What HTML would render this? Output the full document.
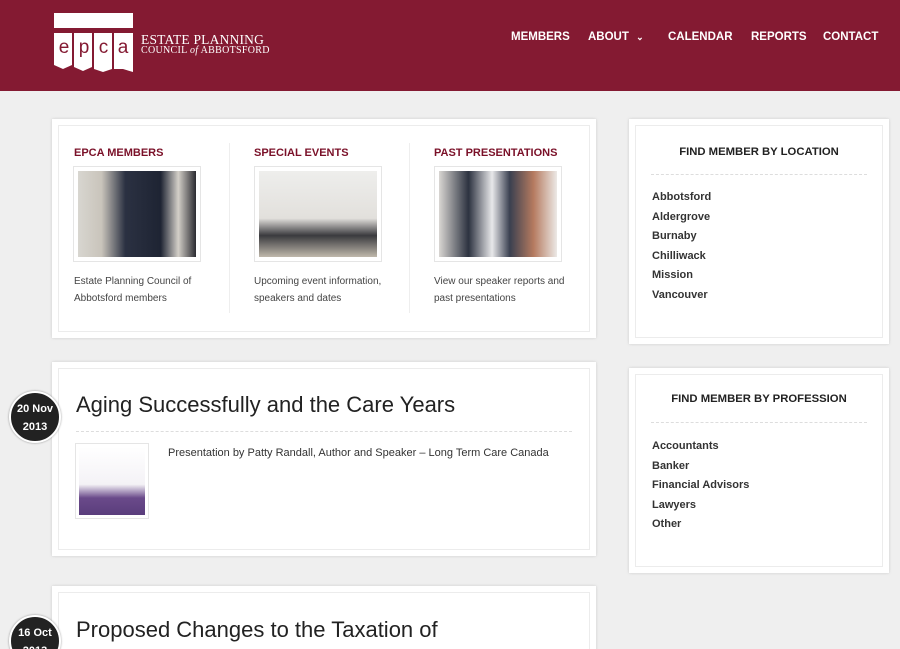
<!DOCTYPE html>
<html><head><meta charset="utf-8"><style>
*{margin:0;padding:0;box-sizing:border-box}
html,body{width:900px;height:649px;overflow:hidden}
body{background:#efefef;font-family:"Liberation Sans",sans-serif;color:#333;position:relative}
.hdr{position:absolute;left:0;top:0;width:900px;height:91px;background:#841a32}
.nav{position:absolute;top:31px;font-weight:bold;font-size:11.5px;color:#fff}
.box{position:absolute;background:#fff;box-shadow:0 0 3px rgba(0,0,0,.15)}
.in{position:absolute;left:6px;top:6px;right:6px;bottom:6px;border:1px solid #ececec}
.abs{position:absolute}
.h3{font-weight:bold;font-size:11px;color:#7a1028}
.img{position:absolute;width:128px;height:96px;border:1px solid #e5e5e5;padding:4px;background:#fff}
.img div{width:100%;height:100%}
.txt{font-size:10px;line-height:17px;color:#444}
.vl{position:absolute;top:24px;width:1px;height:170px;background:#eee}
.side h4{font-size:11.3px;font-weight:bold;color:#222;text-align:center}
.list{font-size:11px;font-weight:bold;color:#333;line-height:19.5px}
.date{position:absolute;left:9px;width:52px;height:52px;border-radius:50%;background:#222;border:2px solid #fff;box-shadow:0 0 2px rgba(0,0,0,.4);color:#fff;font-weight:bold;font-size:11px;text-align:center;line-height:18px;padding-top:7px}
.title{font-size:22px;color:#222}
.dash{position:absolute;border-top:1px dashed #ddd;height:0}
</style></head><body>
<div class="hdr">
 <div class="abs" style="left:54px;top:13px;width:79px;height:15px;background:#fff"></div>
 <div class="abs" style="left:54px;top:33px;width:79px;height:42px">
  <svg width="79" height="42" viewBox="0 0 79 42">
   <path d="M0 0h18v32l-9 4-9-4z M20 0h18v34l-9 4-9-4z M40 0h18v36l-9 3-9-3z M60 0h19v39l-10-3-9 0z" fill="#fff"/>
  </svg>
  <div class="abs" style="left:0;top:4px;width:79px;font-family:'Liberation Sans',sans-serif;font-size:19px;color:#841a32;display:flex;justify-content:space-around">
   <span>e</span><span>p</span><span>c</span><span>a</span></div>
 </div>
 <div class="abs" style="left:141px;top:32px;font-family:'Liberation Serif',serif;color:#fff;font-size:13.5px;letter-spacing:.2px">ESTATE PLANNING</div>
 <div class="abs" style="left:141px;top:45px;font-family:'Liberation Serif',serif;color:#fff;font-size:10px;letter-spacing:.3px">COUNCIL <i>of</i> ABBOTSFORD</div>
 <div class="nav" style="left:511px">MEMBERS</div>
 <div class="nav" style="left:588px">ABOUT <span style="font-size:9px;margin-left:4px">&#8964;</span></div>
 <div class="nav" style="left:668px">CALENDAR</div>
 <div class="nav" style="left:751px">REPORTS</div>
 <div class="nav" style="left:823px">CONTACT</div>
</div>

<div class="box" style="left:52px;top:119px;width:544px;height:219px"><div class="in"></div>
 <div class="vl" style="left:177px"></div><div class="vl" style="left:357px"></div>
 <div class="abs h3" style="left:22px;top:28px">EPCA MEMBERS</div>
 <div class="img" style="left:21px;top:47px"><div style="background:linear-gradient(90deg,#d8d6d0 0,#c9c4bb 20%,#2b3142 40%,#1e2433 70%,#d3cfc8 85%,#2a2a30 100%)"></div></div>
 <div class="abs txt" style="left:22px;top:154px">Estate Planning Council of<br>Abbotsford members</div>
 <div class="abs h3" style="left:202px;top:28px">SPECIAL EVENTS</div>
 <div class="img" style="left:202px;top:47px"><div style="background:linear-gradient(180deg,#eeeeec 0,#e2e0dc 55%,#3a3a3e 75%,#bfb8ab 100%)"></div></div>
 <div class="abs txt" style="left:202px;top:154px">Upcoming event information,<br>speakers and dates</div>
 <div class="abs h3" style="left:382px;top:28px">PAST PRESENTATIONS</div>
 <div class="img" style="left:382px;top:47px"><div style="background:linear-gradient(90deg,#d9d6d2 0,#2c3240 25%,#e8e8ea 45%,#3a4050 60%,#b57a5f 80%,#ece9e6 100%)"></div></div>
 <div class="abs txt" style="left:382px;top:154px">View our speaker reports and<br>past presentations</div>
</div>

<div class="box side" style="left:629px;top:119px;width:260px;height:225px"><div class="in"></div>
 <h4 class="abs" style="left:0;width:260px;top:27px">FIND MEMBER BY LOCATION</h4>
 <div class="dash" style="left:22px;width:216px;top:55px"></div>
 <div class="abs list" style="left:23px;top:69px">Abbotsford<br>Aldergrove<br>Burnaby<br>Chilliwack<br>Mission<br>Vancouver</div>
</div>

<div class="box side" style="left:629px;top:368px;width:260px;height:205px"><div class="in"></div>
 <h4 class="abs" style="left:0;width:260px;top:25px">FIND MEMBER BY PROFESSION</h4>
 <div class="dash" style="left:22px;width:216px;top:54px"></div>
 <div class="abs list" style="left:23px;top:69px">Accountants<br>Banker<br>Financial Advisors<br>Lawyers<br>Other</div>
</div>

<div class="box" style="left:52px;top:362px;width:544px;height:194px"><div class="in"></div>
 <div class="abs title" style="left:24px;top:30px">Aging Successfully and the Care Years</div>
 <div class="dash" style="left:24px;width:496px;top:69px"></div>
 <div class="img" style="left:23px;top:81px;width:74px;height:76px;padding:3px"><div style="background:linear-gradient(180deg,#fff 0,#f4f2f6 55%,#6a4a8a 75%,#5a3d7c 100%)"></div></div>
 <div class="abs" style="left:116px;top:85px;font-size:11px;color:#333">Presentation by Patty Randall, Author and Speaker – Long Term Care Canada</div>
</div>
<div class="date" style="top:391px">20 Nov<br>2013</div>

<div class="box" style="left:52px;top:586px;width:544px;height:80px"><div class="in" style="bottom:-10px"></div>
 <div class="abs title" style="left:24px;top:31px">Proposed Changes to the Taxation of</div>
</div>
<div class="date" style="top:615px">16 Oct<br>2013</div>
</body></html>
